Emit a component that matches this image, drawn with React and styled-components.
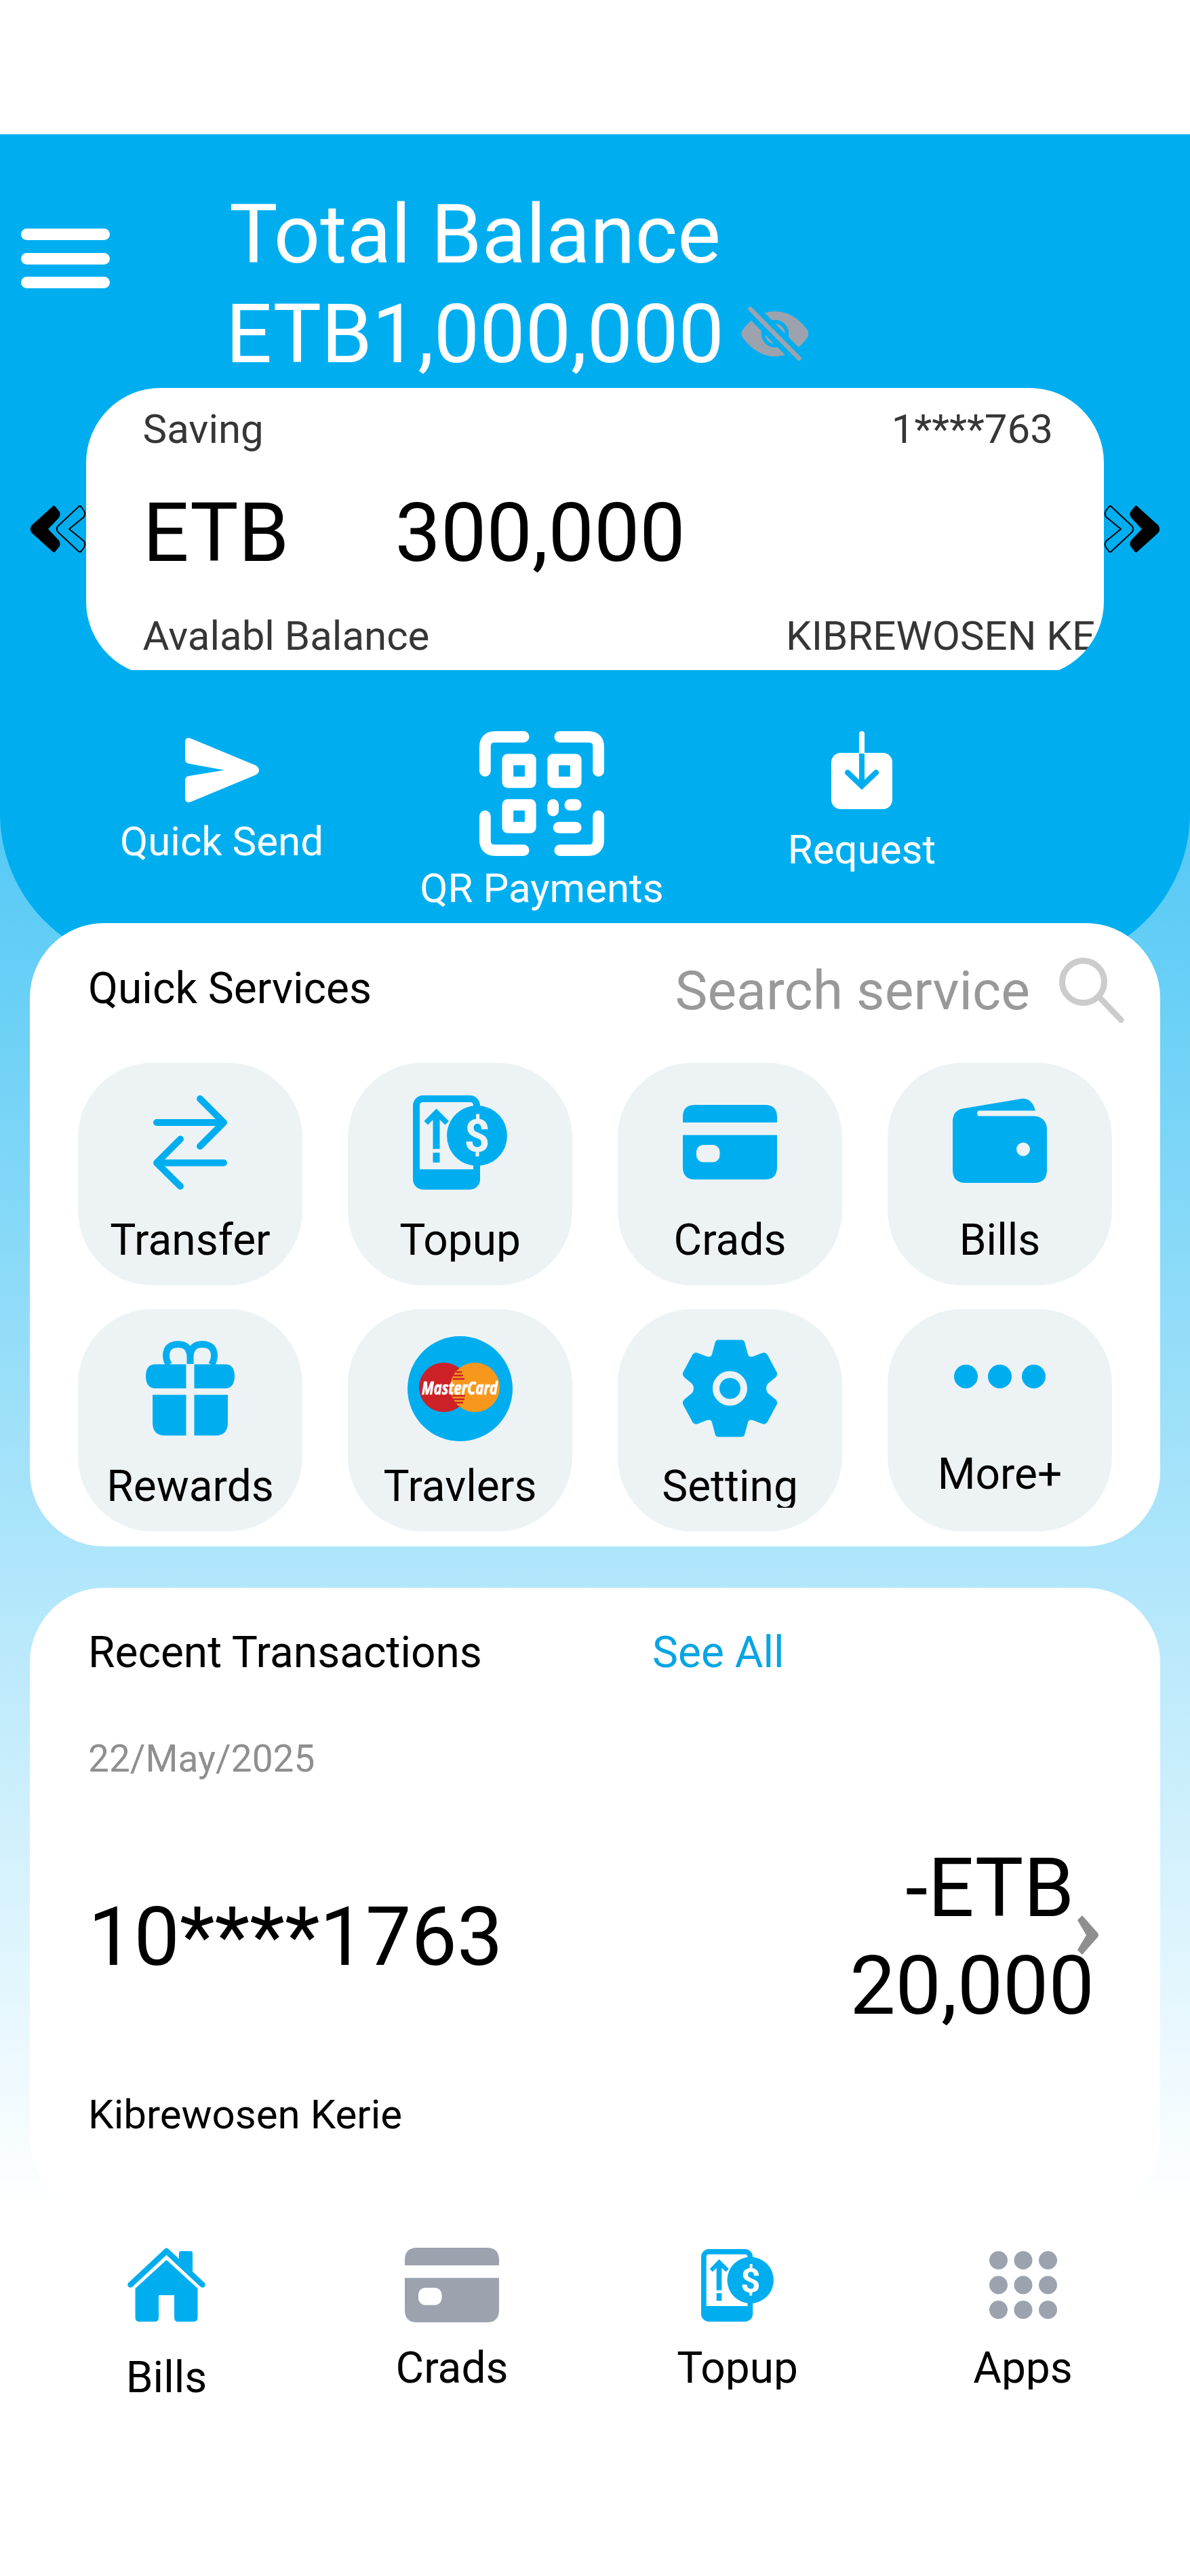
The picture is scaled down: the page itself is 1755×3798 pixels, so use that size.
import React from "react";
import styled, { createGlobalStyle } from "styled-components";

const BLUE = "#00aef0";
const GRAY = "#9ca3af";
const TILE = "#edf3f5";

const GlobalStyle = createGlobalStyle`
  body { margin: 0; background: #fff; font-family: Roboto, "Liberation Sans", sans-serif; color: #000; }
  svg { display: block; flex: none; }
`;

const Phone = styled.div`
  width: 1755px;
  height: 3798px;
  overflow: hidden;
  display: flex;
  flex-direction: column;
  background: #fff;
`;
const StatusBar = styled.div`
  height: 198px;
  flex: none;
`;
const Screen = styled.main`
  height: 3047px;
  flex: none;
  overflow: hidden;
  background: linear-gradient(${BLUE} 0, #fff 3060px);
`;
const Hero = styled.header`
  height: 1226px;
  box-sizing: border-box;
  padding-top: 74.5px;
  border-radius: 0 0 225px 225px;
  background: ${BLUE};
  color: #fff;
`;
const TopRow = styled.div`
  display: flex;
  padding-left: 31px;
`;
const MenuButton = styled.div`
  display: flex;
  flex-direction: column;
  gap: 18.6px;
  width: 131px;
  margin: 64.5px 171px 0 0;
`;
const MenuBar = styled.span`
  height: 17px;
  border-radius: 8.5px;
  background: #fff;
`;
const Balance = styled.div`
  display: flex;
  flex-direction: column;
  align-items: center;
  font-size: 120px;
  line-height: 147px;
  margin-right: 25px;
  white-space: nowrap;
`;
const EyeSlot = styled.div`
  margin-top: 178px;
`;
const Carousel = styled.div`
  display: flex;
  align-items: center;
  margin-top: 5.5px;
  padding-left: 44px;
`;
const CardWindow = styled.div`
  width: 1501px;
  height: 416px;
  overflow: hidden;
`;
const AccountCard = styled.section`
  height: 425px;
  box-sizing: border-box;
  padding: 25.5px 0 0 83.5px;
  border-radius: 110px;
  overflow: hidden;
  background: #fff;
  color: #363636;
  display: flex;
  flex-direction: column;
  gap: 48px;
`;
const CardRow = styled.div`
  display: flex;
  justify-content: space-between;
  font-size: 60px;
  line-height: 70px;
  padding-right: ${(p) => p.$right || 0}px;
`;
const HolderName = styled.span`
  width: 454px;
  overflow: hidden;
  white-space: nowrap;
`;
const CardAmount = styled.div`
  display: grid;
  grid-template-columns: 372px 1fr;
  font-size: 120px;
  line-height: 140px;
  margin-bottom: -1px;
  color: #000;
`;
const Actions = styled.nav`
  display: grid;
  grid-template-columns: repeat(3, 472px);
  padding: 90px 0 0 91px;
`;
const Action = styled.div`
  display: flex;
  flex-direction: column;
  align-items: center;
  gap: 12.5px;
  font-size: 60px;
  line-height: 70px;
`;
const Panel = styled.section`
  width: 1667px;
  height: ${(p) => p.$height}px;
  margin: ${(p) => p.$top}px auto 0;
  border-radius: 110px;
  background: #fff;
  overflow: hidden;
`;
const ServicesHead = styled.div`
  display: flex;
  justify-content: space-between;
  align-items: center;
  height: 199px;
  padding: 0 53px 0 86px;
`;
const SectionTitle = styled.h2`
  margin: 0;
  font-size: 64px;
  font-weight: 400;
  line-height: 80px;
  padding-bottom: ${(p) => p.$lift || 0}px;
`;
const SearchBox = styled.div`
  display: flex;
  align-items: center;
  gap: 43px;
  font-size: 80.6px;
  line-height: 100px;
  color: #999;
`;
const Tiles = styled.div`
  display: grid;
  grid-template-columns: repeat(4, 331px);
  gap: 35.5px 67px;
  padding: 7px 0 0 71px;
`;
const Tile = styled.div`
  height: 327.5px;
  box-sizing: border-box;
  padding-top: 39.5px;
  border-radius: 110px;
  background: ${TILE};
  display: flex;
  flex-direction: column;
  align-items: center;
  gap: 36px;
`;
const IconSlot = styled.div`
  height: ${(p) => p.$height}px;
  display: flex;
  align-items: center;
`;
const Label = styled.span`
  height: 62px;
  overflow: hidden;
  font-size: 64px;
  line-height: 62px;
`;
const RecentHead = styled.div`
  display: grid;
  grid-template-columns: 832px 1fr;
  padding: 56px 0 0 86px;
`;
const SeeAll = styled.a`
  font-size: 64px;
  line-height: 80px;
  color: #08a5e3;
`;
const DateLine = styled.div`
  margin: 81px 0 84px 86px;
  font-size: 55px;
  line-height: 70px;
  color: #8f8f8f;
`;
const Transaction = styled.div`
  display: flex;
  align-items: center;
  padding: 0 91.5px 0 86px;
  font-size: 120px;
  line-height: 144px;
`;
const Account = styled.span`
  flex: 1;
`;
const Amount = styled.span`
  position: relative;
  text-align: right;
  margin-right: -25.5px;
`;
const ChevronSlot = styled.div`
  margin-bottom: 6px;
`;
const Payee = styled.div`
  margin: 83px 0 0 86px;
  font-size: 60px;
  line-height: 70px;
`;
const BottomNav = styled.nav`
  display: grid;
  grid-template-columns: repeat(4, 421px);
  padding: 69px 0 0 35px;
`;
const NavItem = styled.div`
  display: flex;
  flex-direction: column;
  align-items: center;
  gap: 37px;
`;

const EyeOff = () => (
  <svg width="99" height="82" viewBox="1092 451 99 82">
    <path d="M1094 487C1105 471 1122 459 1142 459S1179 471 1190 487Q1193 492 1190 497C1179 513 1162 525.500 1142 525.500S1105 513 1094 497Q1091 492 1094 487Z" fill={GRAY} />
    <circle cx="1142" cy="492" r="17.500" fill="none" stroke={BLUE} strokeWidth="5.500" />
    <path d="M1100 450L1183 534" stroke={BLUE} strokeWidth="22" />
    <path d="M1105.500 455.500L1177.500 528.500" stroke={GRAY} strokeWidth="6.500" strokeLinecap="round" />
  </svg>
);

const Chevrons = ({ flip }) => (
  <svg width="83" height="72" viewBox="0 0 83 72" transform={flip ? "scale(-1 1)" : undefined}>
    <g stroke="#000" strokeLinejoin="round">
      <path d="M35.500 4L42 12Q43 15 41 18L24 36L41 54Q43 57 42 60L35.500 68L4.500 40Q1.500 36 4.500 32Z" strokeWidth="4.500" />
      <path d="M72 3Q73.500 1 75.500 3L80 9Q82.500 13 80 18L58 36L80 54Q82.500 59 80 63L75.500 69Q73.500 71 72 69L41 40Q38.500 36 41 32Z" fill="none" strokeWidth="2" />
    </g>
  </svg>
);

const SendIcon = () => (
  <svg width="109" height="115" viewBox="0 0 109 115">
    <path d="M0 15Q1 8 9 11L103 50Q109 53 109 57.500T103 65L9 104Q1 107 0 100V72Q0 67 6 66L58 57.500L6 48Q0 47 0 42Z" fill="#fff" />
  </svg>
);

const QrIcon = () => (
  <svg width="184" height="184" viewBox="0 0 11 11" fill="none" stroke="#fff" strokeLinecap="round" strokeLinejoin="round">
    <path d="M.5 3.500V1.400Q.5 .5 1.400 .5H3.900M7.100 .5H9.600Q10.500 .5 10.500 1.400V3.500M10.500 7.500V9.600Q10.500 10.500 9.600 10.500H7.100M3.900 10.500H1.400Q.5 10.500 .5 9.600V7.500" />
    <rect x="2.500" y="2.500" width="2" height="2" />
    <rect x="6.500" y="2.500" width="2" height="2" />
    <rect x="2.500" y="6.500" width="2" height="2" />
    <path d="M6.500 6.500V7M8 6.500H8.500M7 8.500H8.500" />
  </svg>
);

const RequestIcon = () => (
  <svg width="90" height="127" viewBox="0 0 90 127" strokeWidth="8">
    <rect y="32" width="90" height="83" rx="14" fill="#fff" />
    <path d="M45 32V4" stroke="#fff" />
    <circle cx="45" cy="4" r="4" fill="#fff" />
    <path d="M45 33V80" stroke={BLUE} />
    <path d="M24 61L45 81L66 61" fill="none" stroke={BLUE} strokeLinecap="round" />
  </svg>
);

const SearchIcon = () => (
  <svg width="96" height="97" viewBox="0 0 96 97" fill="none" stroke="#ccc">
    <circle cx="35.500" cy="35.500" r="31" strokeWidth="9" />
    <path d="M60 59L91.500 92" strokeWidth="8.500" strokeLinecap="round" />
  </svg>
);

const TransferIcon = () => (
  <svg width="109" height="139" viewBox="0 0 109 139" fill="none" stroke={BLUE} strokeWidth="10" strokeLinecap="round" strokeLinejoin="round">
    <path d="M5 40H104M69 5L104 40L69 75M104 99.500H5M40 64.500L5 99.500L40 134" />
  </svg>
);

const TopupIcon = ({ size, screen }) => (
  <svg width={size} height={size} viewBox="0 0 139 139">
    <rect width="99" height="139" rx="15" fill={BLUE} />
    <path d="M10 15Q10 10 15 10H84Q89 10 89 15V109H10Z" fill={screen} />
    <path d="M34.500 19.500L53 38L47.500 43.500L39.500 36V79H29.500V36L22 43.500L16.500 38ZM29.500 84.500H39.500V99H29.500Z" fill={BLUE} />
    <circle cx="94.500" cy="59.500" r="44.500" fill={BLUE} />
    <text x="94.500" y="82.500" fill={screen} fontSize="66" fontWeight="700" textAnchor="middle" fontFamily="Roboto, sans-serif">$</text>
  </svg>
);

const CardIcon = ({ color, hole }) => (
  <svg width="139" height="110" viewBox="0 0 139 110">
    <path d="M0 26V18Q0 0 18 0H121Q139 0 139 18V26ZM0 44.500H139V92Q139 110 121 110H18Q0 110 0 92Z" fill={color} />
    <rect x="20" y="59" width="34.500" height="25.500" rx="10" fill={hole} />
  </svg>
);

const WalletIcon = () => (
  <svg width="139" height="139" viewBox="0 0 139 139">
    <path d="M0 39Q0 22 15 19.500L98 5.500Q116 1 122 22.500H40Q36 22.500 36 26.500T40 30.500H121Q139 33 139 51V110Q139 129 120 129H19Q0 129 0 110Z" fill={BLUE} />
    <circle cx="104" cy="79.500" r="10" fill={TILE} />
  </svg>
);

const GiftIcon = () => (
  <svg width="131" height="140" viewBox="0 0 131 140" fill={BLUE}>
    <path d="M59.500 34.500H14Q0 34.500 0 52T14 70H59.500ZM71.500 34.500H117Q131 34.500 131 52T117 70H71.500ZM59.500 79.500H10V120Q10 139.500 28 139.500H59.500ZM71.500 79.500H121V120Q121 139.500 103 139.500H71.500Z" />
    <path d="M65.500 34V24Q65 5 48 5Q30 5 30 22Q30 28 34 35M65.500 34V24Q66 5 83 5Q101 5 101 22Q101 28 97 35" fill="none" stroke={BLUE} strokeWidth="10" />
  </svg>
);

const MasterCardIcon = () => (
  <svg width="155" height="155" viewBox="0 0 155 155">
    <circle cx="77.500" cy="77.500" r="77.500" fill={BLUE} />
    <circle cx="53.500" cy="75.500" r="36.500" fill="#cc2127" />
    <circle cx="99.500" cy="75.500" r="36.500" fill="#f7981d" />
    <path d="M72 53H80M68 58H82M67 63H84M66 88H85M67 93H84M68 98H82" stroke="#cc2127" strokeWidth="2.600" />
    <text x="21" y="85.500" fill="#fff" stroke="#fff" strokeWidth=".7" fontSize="27.500" fontWeight="700" fontStyle="italic" fontFamily='"Open Sans", sans-serif' textLength="112" lengthAdjust="spacingAndGlyphs">MasterCard</text>
  </svg>
);

const GearIcon = () => (
  <svg width="139" height="144" viewBox="-69.500 -72 139 144">
    <path
      d="M-17 -71.500H17Q21 -71.500 22 -67L26 -52Q27 -45 34 -47L47 -52Q52 -54 55 -50L69 -24Q71 -20 67 -16L56 -7Q51 0 56 7L67 16Q71 20 69 24L55 50Q52 54 47 52L34 47Q27 45 26 52L22 67Q21 71.500 17 71.500H-17Q-21 71.500 -22 67L-26 52Q-27 45 -34 47L-47 52Q-52 54 -55 50L-69 24Q-71 20 -67 16L-56 7Q-51 0 -56 -7L-67 -16Q-71 -20 -69 -24L-55 -50Q-52 -54 -47 -52L-34 -47Q-27 -45 -26 -52L-22 -67Q-21 -71.500 -17 -71.500Z"
      fill={BLUE}
    />
    <circle r="20.500" fill="none" stroke={TILE} strokeWidth="10" />
  </svg>
);

const MoreIcon = () => (
  <svg width="135" height="137" viewBox="0 0 135 137" fill={BLUE}>
    {[17.5, 67.5, 117.5].map((x) => (
      <circle key={x} cx={x} cy="59.500" r="17.500" />
    ))}
  </svg>
);

const HomeIcon = () => (
  <svg width="115" height="124" viewBox="0 0 115 124" fill={BLUE}>
    <path d="M76 25V8Q76 5 79 5H93Q96 5 96 8V44Z" />
    <path d="M4.500 54.500L57.500 5L110.500 54.500" fill="none" stroke={BLUE} strokeWidth="8.500" strokeLinecap="round" strokeLinejoin="round" />
    <path d="M57.500 18L103.500 60V103Q103.500 109 97 109H75Q69 109 69 103V70H46V103Q46 109 40 109H18Q11.500 109 11.500 103V60Z" />
  </svg>
);

const AppsIcon = () => (
  <svg width="100" height="100" viewBox="0 0 100 100" fill={GRAY}>
    {[13.5, 50, 86.5].map((y) =>
      [13.5, 50, 86.5].map((x) => <circle key={`${x}-${y}`} cx={x} cy={y} r="13.500" />)
    )}
  </svg>
);

const ChevronRight = () => (
  <svg width="31" height="58" viewBox="0 0 31 58">
    <path d="M7 0L30 26Q32 29 30 32L7 58L0 51L13 29L0 7Z" fill="#8f8f8f" />
  </svg>
);

const services = [
  { label: "Transfer", icon: <TransferIcon /> },
  { label: "Topup", icon: <TopupIcon size={139} screen={TILE} /> },
  { label: "Crads", icon: <CardIcon color={BLUE} hole={TILE} /> },
  { label: "Bills", icon: <WalletIcon /> },
  { label: "Rewards", icon: <GiftIcon /> },
  { label: "Travlers", icon: <MasterCardIcon /> },
  { label: "Setting", icon: <GearIcon /> },
  { label: "More+", icon: <MoreIcon />, slot: 137 },
];

const tabs = [
  { label: "Bills", icon: <HomeIcon />, slot: 124 },
  { label: "Crads", icon: <CardIcon color={GRAY} hole="#fff" /> },
  { label: "Topup", icon: <TopupIcon size={107} screen="#fff" /> },
  { label: "Apps", icon: <AppsIcon /> },
];

export default function App() {
  return (
    <>
      <GlobalStyle />
      <Phone>
        <StatusBar />
        <Screen>
          <Hero>
            <TopRow>
              <MenuButton>
                <MenuBar />
                <MenuBar />
                <MenuBar />
              </MenuButton>
              <Balance>
                <span>Total Balance</span>
                <span>ETB1,000,000</span>
              </Balance>
              <EyeSlot>
                <EyeOff />
              </EyeSlot>
            </TopRow>
            <Carousel>
              <Chevrons />
              <CardWindow>
                <AccountCard>
                  <CardRow $right={75}>
                    <span>Saving</span>
                    <span>1****763</span>
                  </CardRow>
                  <CardAmount>
                    <span>ETB</span>
                    <span>300,000</span>
                  </CardAmount>
                  <CardRow $right={15}>
                    <span>Avalabl Balance</span>
                    <HolderName>KIBREWOSEN KERIE</HolderName>
                  </CardRow>
                </AccountCard>
              </CardWindow>
              <Chevrons flip />
            </Carousel>
            <Actions>
              <Action>
                <SendIcon />
                Quick Send
              </Action>
              <Action>
                <QrIcon />
                QR Payments
              </Action>
              <Action>
                <RequestIcon />
                Request
              </Action>
            </Actions>
          </Hero>
          <Panel $height={919} $top={-63}>
            <ServicesHead>
              <SectionTitle $lift={6}>Quick Services</SectionTitle>
              <SearchBox>
                <span>Search service</span>
                <SearchIcon />
              </SearchBox>
            </ServicesHead>
            <Tiles>
              {services.map((s) => (
                <Tile key={s.label}>
                  <IconSlot $height={s.slot || 155}>{s.icon}</IconSlot>
                  <Label>{s.label}</Label>
                </Tile>
              ))}
            </Tiles>
          </Panel>
          <Panel $height={922} $top={61}>
            <RecentHead>
              <SectionTitle>Recent Transactions</SectionTitle>
              <SeeAll>See All</SeeAll>
            </RecentHead>
            <DateLine>22/May/2025</DateLine>
            <Transaction>
              <Account>10****1763</Account>
              <Amount>
                -ETB&nbsp;
                <br />
                20,000
              </Amount>
              <ChevronSlot>
                <ChevronRight />
              </ChevronSlot>
            </Transaction>
            <Payee>Kibrewosen Kerie</Payee>
          </Panel>
        </Screen>
        <BottomNav>
          {tabs.map((t) => (
            <NavItem key={t.label}>
              <IconSlot $height={t.slot || 110}>{t.icon}</IconSlot>
              <Label>{t.label}</Label>
            </NavItem>
          ))}
        </BottomNav>
      </Phone>
    </>
  );
}
